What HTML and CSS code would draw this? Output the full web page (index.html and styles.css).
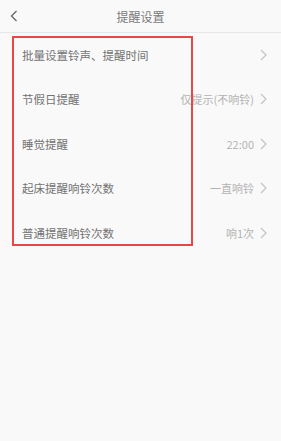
FILE: index.html
```html
<!DOCTYPE html>
<html lang="zh">
<head>
    <meta charset="UTF-8">
    <meta name="viewport" content="width=device-width, initial-scale=1.0">
    <title>提醒设置</title>
    <link rel="stylesheet" href="styles.css">
</head>
<body>
    <header class="top-bar">
        <svg class="back" width="8" height="12" viewBox="0 0 8 12"><path d="M6.5 1 L1.5 6 L6.5 11" fill="none" stroke="#666" stroke-width="1.3"/></svg>
        <h1>提醒设置</h1>
    </header>

    <div class="settings">
        <div class="row">
            <span class="label">批量设置铃声、提醒时间</span>
            <span class="value"></span>
            <svg class="arrow" width="7" height="12" viewBox="0 0 7 12"><path d="M1 1 L6 6 L1 11" fill="none" stroke="#c0c0c0" stroke-width="1.1"/></svg>
        </div>
        <div class="row">
            <span class="label">节假日提醒</span>
            <span class="value">仅提示(不响铃)</span>
            <svg class="arrow" width="7" height="12" viewBox="0 0 7 12"><path d="M1 1 L6 6 L1 11" fill="none" stroke="#c0c0c0" stroke-width="1.1"/></svg>
        </div>
        <div class="row">
            <span class="label">睡觉提醒</span>
            <span class="value">22:00</span>
            <svg class="arrow" width="7" height="12" viewBox="0 0 7 12"><path d="M1 1 L6 6 L1 11" fill="none" stroke="#c0c0c0" stroke-width="1.1"/></svg>
        </div>
        <div class="row">
            <span class="label">起床提醒响铃次数</span>
            <span class="value">一直响铃</span>
            <svg class="arrow" width="7" height="12" viewBox="0 0 7 12"><path d="M1 1 L6 6 L1 11" fill="none" stroke="#c0c0c0" stroke-width="1.1"/></svg>
        </div>
        <div class="row">
            <span class="label">普通提醒响铃次数</span>
            <span class="value">响1次</span>
            <svg class="arrow" width="7" height="12" viewBox="0 0 7 12"><path d="M1 1 L6 6 L1 11" fill="none" stroke="#c0c0c0" stroke-width="1.1"/></svg>
        </div>

        <!-- annotation box over the labels -->
        <div class="highlight"></div>
    </div>
</body>
</html>
```

FILE: styles.css
```css
* {
    margin: 0;
    padding: 0;
    box-sizing: border-box;
}

body {
    font-family: "Noto Sans CJK SC", "Noto Sans", sans-serif;
    background-color: #f9f9f9;
    color: #666;
    width: 281px;
    height: 441px;
}

.top-bar {
    height: 33px;
    display: flex;
    align-items: center;
    justify-content: center;
    position: relative;
    border-bottom: 1px solid #e6e6e6;
}

.top-bar h1 {
    font-size: 12px;
    font-weight: normal;
    color: #7a7a7a;
}

.top-bar .back {
    position: absolute;
    left: 10px;
    top: 10px;
}

.settings {
    position: relative;
}

.row {
    height: 44.5px;
    display: flex;
    align-items: center;
    padding: 0 14px 0 22px;
}

.row:first-child {
    height: 44px;
}

.label {
    font-size: 11.5px;
    color: #737373;
    flex: 1;
}

.value {
    font-size: 11px;
    color: #b3b3b3;
    margin-right: 6px;
}

.arrow {
    display: block;
}

.highlight {
    position: absolute;
    left: 12px;
    top: 3px;
    width: 181px;
    height: 210px;
    border: 2px solid #e8464a;
}
```
